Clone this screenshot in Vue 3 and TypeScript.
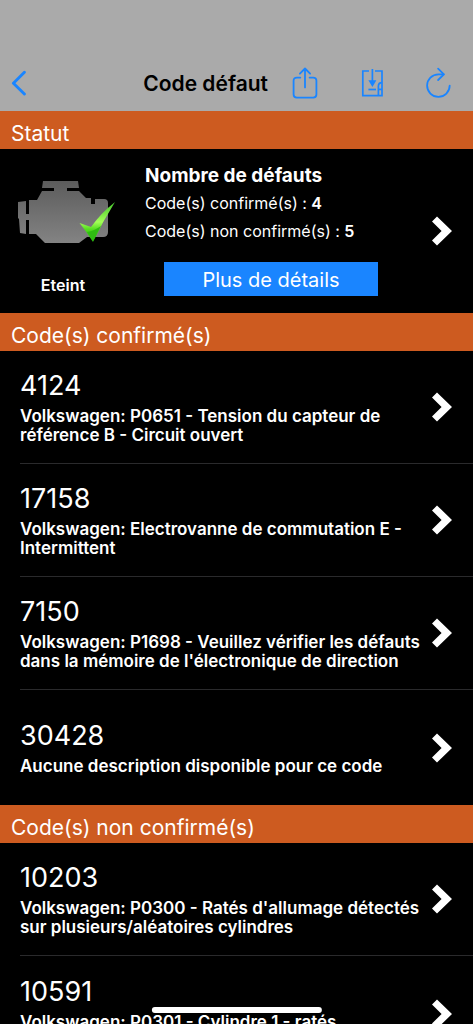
<script setup lang="ts">
interface Fault {
  code: string
  description: string
}

const confirmed: Fault[] = [
  { code: '4124', description: 'Volkswagen: P0651 - Tension du capteur de référence B - Circuit ouvert' },
  { code: '17158', description: 'Volkswagen: Electrovanne de commutation E - Intermittent' },
  { code: '7150', description: "Volkswagen: P1698 - Veuillez vérifier les défauts dans la mémoire de l'électronique de direction" },
  { code: '30428', description: 'Aucune description disponible pour ce code' },
]

const pending: Fault[] = [
  { code: '10203', description: "Volkswagen: P0300 - Ratés d'allumage détectés sur plusieurs/aléatoires cylindres" },
  { code: '10591', description: "Volkswagen: P0301 - Cylindre 1 - ratés d'allumage détectés" },
]

const sections = [
  { title: 'Code(s) confirmé(s)', faults: confirmed },
  { title: 'Code(s) non confirmé(s)', faults: pending },
]
</script>

<template>
  <div class="screen">
    <header class="navbar">
      <button class="nav-btn back" type="button" aria-label="Retour">
        <svg width="16" height="26" viewBox="0 0 16 26" fill="none" stroke="currentColor" stroke-width="2.9" stroke-linecap="round" stroke-linejoin="round">
          <path d="M13.4 2.3 2.4 13.2 13.4 24" />
        </svg>
      </button>
      <h1 class="title">Code défaut</h1>
      <div class="actions">
        <button class="nav-btn" type="button" aria-label="Partager">
          <svg width="26" height="32" viewBox="0 0 26 32" fill="none" stroke="currentColor" stroke-width="1.8" stroke-linecap="round" stroke-linejoin="round">
            <path d="M8.3 10.6H4.8Q1.6 10.6 1.6 13.6V27.6Q1.6 30.6 4.8 30.6H21.2Q24.4 30.6 24.4 27.6V13.6Q24.4 10.6 21.2 10.6H17.6" />
            <path d="M13 20.4V1.8M7.9 6.7 13 1.5 18.1 6.7" />
          </svg>
        </button>
        <button class="nav-btn" type="button" aria-label="Télécharger">
          <svg width="24" height="30" viewBox="-1.4 0 24 30" fill="none" stroke="currentColor" stroke-width="1.7">
            <path d="M7.6 3H1.4V27.6H20.6V3H13.6" />
            <path d="M11 1V14" />
            <path d="M7 12.2H15L11 19Z" fill="currentColor" stroke="none" />
            <path d="M7 21.5H14.6" />
            <path d="M20.6 14.6Q17 14.6 17 18V27.6M17 21.3H20.6" />
          </svg>
        </button>
        <button class="nav-btn" type="button" aria-label="Actualiser">
          <svg width="26" height="32" viewBox="0.6 0 26 32" fill="none" stroke="currentColor" stroke-width="1.8" stroke-linecap="round" stroke-linejoin="round">
            <path d="M18.2 7.3H13A11.3 11.3 0 1 0 24.3 18.6" />
            <path d="M12.7 1.6 18.5 7.3 12.7 13" />
          </svg>
        </button>
      </div>
    </header>

    <main class="content">
      <section>
        <h2 class="band">Statut</h2>
        <div class="status">
          <div class="lamp">
            <svg class="engine" width="100" height="66" viewBox="0 0 100 66" aria-hidden="true">
              <defs>
                <linearGradient id="metal" x1="0" y1="0" x2="0" y2="1">
                  <stop offset="0" stop-color="#5c5c5c" />
                  <stop offset="1" stop-color="#838383" />
                </linearGradient>
                <linearGradient id="leaf" x1="0" y1="0" x2="0" y2="1">
                  <stop offset="0" stop-color="#42c52a" />
                  <stop offset="0.5" stop-color="#a4ff58" />
                  <stop offset="0.68" stop-color="#55df20" />
                  <stop offset="1" stop-color="#25ae0d" />
                </linearGradient>
              </defs>
              <path fill="url(#metal)" d="M26 1H61L62 8H50V11H62L69 18H74V24H78V19H87Q91 19 91 23V52Q91 57 86 57H70L62 63H28L19 54H12V40H9V54L3 53L2 39L1 38V22L9 21V34H12V20H20L25 11H37V8H25Z" />
              <path fill="url(#leaf)" d="M62.500 43 74 47Q84 33 98 22 86 41 76 62 69 51 62.500 43Z" />
              <path fill="#2fbd12" d="M70 52Q77 51 84 46 80 53 76 61Z" />
            </svg>
            <span class="lamp-label">Eteint</span>
          </div>
          <div class="summary">
            <h3 class="summary-title">Nombre de défauts</h3>
            <p class="count">Code(s) confirmé(s) : <b>4</b></p>
            <p class="count">Code(s) non confirmé(s) : <b>5</b></p>
            <button class="details" type="button">Plus de détails</button>
          </div>
          <button class="open" type="button" aria-label="Ouvrir le statut">
            <svg class="chevron" width="22" height="30" viewBox="0 0 22 30" aria-hidden="true">
              <path fill="#fff" d="M1 5.6 6 .4 21 15 6 29.6 1 24.6 10.6 15Z" />
            </svg>
          </button>
        </div>
      </section>

      <section v-for="section in sections" :key="section.title">
        <h2 class="band">{{ section.title }}</h2>
        <ul class="list">
          <li v-for="fault in section.faults" :key="fault.code" class="item">
            <button class="row" type="button">
              <span class="text">
                <span class="code">{{ fault.code }}</span>
                <span class="description">{{ fault.description }}</span>
              </span>
              <svg class="chevron" width="22" height="30" viewBox="0 0 22 30" aria-hidden="true">
                <path fill="#fff" d="M1 5.6 6 .4 21 15 6 29.6 1 24.6 10.6 15Z" />
              </svg>
            </button>
          </li>
        </ul>
      </section>
    </main>
    <div class="home-indicator"></div>
  </div>
</template>

<style>
body {
  margin: 0;
  background: #000;
}
</style>

<style scoped>
.screen {
  position: relative;
  display: flex;
  flex-direction: column;
  height: 100vh;
  overflow: hidden;
  background: #000;
  color: #fff;
  font-family: Inter, "Liberation Sans", sans-serif;
}

button {
  margin: 0;
  padding: 0;
  border: 0;
  background: none;
  color: inherit;
  font: inherit;
  cursor: pointer;
}

svg {
  display: block;
  flex: none;
}

.navbar {
  display: flex;
  align-items: center;
  flex: none;
  height: 56px;
  padding: 55px 21px 0 11px;
  background: #aaa;
}

.nav-btn {
  color: #1a85ff;
}

.title {
  flex: 1;
  margin: 0;
  padding: 2px 24px 0 0;
  color: #000;
  font-size: 21px;
  line-height: 26px;
  font-weight: 600;
  text-align: right;
}

.actions {
  display: flex;
  align-items: center;
  gap: 42px;
}

.content {
  flex: 1;
  min-height: 0;
  overflow-y: auto;
  scrollbar-width: none;
}

.band {
  margin: 0;
  padding: 8px 11px 0;
  background: #cd5b20;
  font-size: 21px;
  line-height: 30px;
  font-weight: 400;
}

.status {
  display: flex;
  min-height: 164px;
}

.lamp {
  display: flex;
  flex-direction: column;
  align-items: center;
  flex: none;
  width: 126px;
  padding-top: 31px;
}

.engine {
  align-self: flex-end;
  margin-right: 9px;
}

.lamp-label {
  margin-top: 29px;
  font-size: 16px;
  line-height: 20px;
  font-weight: 600;
}

.summary {
  flex: 1;
  padding: 14px 0 0 19px;
}

.summary-title {
  margin: 0;
  font-size: 19px;
  line-height: 26px;
  font-weight: 700;
}

.count {
  margin: 0;
  font-size: 16px;
  line-height: 28px;
  font-weight: 400;
}

.count b {
  font-weight: 600;
}

.details {
  display: block;
  width: calc(100% - 72px);
  height: 34px;
  margin: 17px 0 0 19px;
  padding-top: 2px;
  background: #1a85ff;
  font-size: 20px;
  line-height: 32px;
}

.open {
  padding: 0 20px 0 0;
}

.list {
  margin: 0;
  padding: 0;
  list-style: none;
}

.item {
  padding-left: 20px;
}

.row {
  display: flex;
  align-items: center;
  justify-content: space-between;
  width: 100%;
  min-height: 113px;
  padding-right: 20px;
  border-bottom: 1px solid #2a2a2c;
  text-align: left;
}

.item:last-child .row {
  min-height: 115px;
  border-bottom: 0;
}

.text {
  display: flex;
  flex-direction: column;
  gap: 5px;
  flex: 1;
  padding-right: 10px;
}

.code {
  font-size: 27px;
  line-height: 32px;
  font-weight: 400;
}

.description {
  font-size: 17px;
  line-height: 19px;
  font-weight: 600;
}

.home-indicator {
  position: absolute;
  bottom: 11px;
  left: 50%;
  width: 36%;
  height: 6px;
  border-radius: 3px;
  background: #fff;
  transform: translateX(-50%);
}
</style>
